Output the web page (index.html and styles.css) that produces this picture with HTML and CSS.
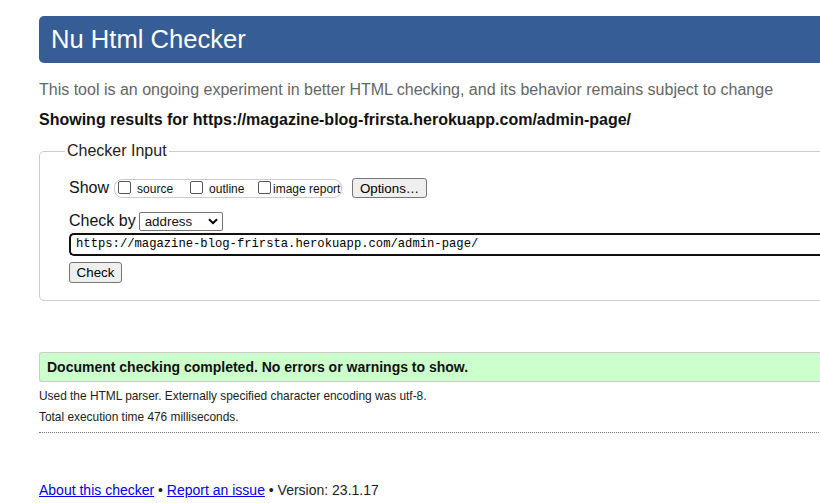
FILE: index.html
```html
<!DOCTYPE html>
<html lang="en">
<head>
<meta charset="utf-8">
<title>Nu Html Checker</title>
<link rel="stylesheet" href="styles.css">
</head>
<body>
<div class="page">
  <h1 class="title">Nu Html Checker</h1>
  <p class="intro">This tool is an ongoing experiment in better HTML checking, and its behavior remains subject to change</p>
  <p class="showing">Showing results for https://magazine-blog-frirsta.herokuapp.com/admin-page/</p>
  <fieldset class="input-box">
    <legend class="legend">Checker Input</legend>
    <div class="row show-row">
      <span class="label">Show</span>
      <span class="group">
        <label class="opt opt-source"><input type="checkbox" class="cb">source</label>
        <label class="opt opt-outline"><input type="checkbox" class="cb">outline</label>
        <label class="opt opt-image"><input type="checkbox" class="cb">image report</label>
      </span>
      <button class="btn btn-options" type="button">Options…</button>
    </div>
    <div class="row checkby-row">
      <span class="label">Check by</span>
      <span class="select">address<svg class="chev" width="10" height="7" viewBox="0 0 10 7"><path d="M1 1.2 L5 5.2 L9 1.2" fill="none" stroke="#000" stroke-width="2"/></svg></span>
    </div>
    <div class="url">https://magazine-blog-frirsta.herokuapp.com/admin-page/</div>
    <div class="row">
      <button class="btn btn-check" type="button">Check</button>
    </div>
  </fieldset>
  <p class="success">Document checking completed. No errors or warnings to show.</p>
  <p class="details">Used the HTML parser. Externally specified character encoding was utf-8.</p>
  <p class="details">Total execution time 476 milliseconds.</p>
  <hr class="dots">
  <p class="footer"><a href="#">About this checker</a> • <a href="#">Report an issue</a> • Version: 23.1.17</p>
</div>
</body>
</html>
```
FILE: styles.css
```css
html, body {
  margin: 0;
  padding: 0;
  overflow: hidden;
  background: #fff;
}
body {
  font-family: "Liberation Sans", Arial, sans-serif;
  color: #111;
}
.page {
  width: 1000px;
  padding: 16px 0 0 39px;
}
.title {
  margin: 0;
  height: 47px;
  line-height: 47px;
  background: #365d95;
  color: #fff;
  font-weight: normal;
  font-size: 25.6px;
  padding-left: 12px;
  border-radius: 5px;
}
.intro {
  margin: 18px 0 0;
  font-size: 16px;
  line-height: 18px;
  color: #666;
}
.showing {
  margin: 12px 0 0;
  font-size: 16px;
  line-height: 18px;
  font-weight: bold;
}
.input-box {
  margin: 13px 0 0;
  border: 1px solid #ccc;
  border-radius: 5px;
  padding: 0 0 17px 29px;
  min-width: 0;
}
.legend {
  font-size: 16px;
  line-height: 18px;
  padding: 0 2px;
  margin-left: -4px;
  color: #222;
}
.row {
  display: flex;
  align-items: center;
}
.show-row {
  margin-top: 18px;
  height: 20px;
}
.label {
  font-size: 16px;
  line-height: 18px;
}
.group {
  display: flex;
  align-items: center;
  height: 17px;
  margin-left: 5px;
  border: 1px solid #ccc;
  border-radius: 8px;
  padding: 0 3px 0 3px;
  width: 220px;
  white-space: nowrap;
}
.opt {
  display: flex;
  align-items: center;
  font-size: 12px;
  line-height: 14px;
  padding-top: 2px;
  white-space: nowrap;
}
.cb {
  width: 13px;
  height: 13px;
  margin: 0 6px 0 0;
  appearance: none;
  -webkit-appearance: none;
  border: 1px solid #555;
  border-radius: 2px;
  background: #fff;
  position: relative;
  top: -2px;
  flex: none;
}
.opt-source { width: 72px; flex: none; }
.opt-outline { width: 68px; flex: none; }
.opt-image .cb { margin-right: 2px; }
.btn {
  font-family: "Liberation Sans", Arial, sans-serif;
  font-size: 13.33px;
  color: #000;
  background: #efefef;
  border: 1px solid #767676;
  border-radius: 3px;
  padding: 0 6px;
  height: 20px;
  white-space: nowrap;
}
.btn-options {
  margin-left: 10px;
  width: 75px;
}
.checkby-row {
  margin-top: 13px;
  height: 20px;
}
.select {
  display: flex;
  align-items: center;
  justify-content: space-between;
  margin-left: 3px;
  width: 84px;
  height: 19px;
  box-sizing: border-box;
  border: 1px solid #767676;
  border-radius: 2px;
  font-size: 13.33px;
  padding: 0 4px 0 5px;
}
.chev { display: block; }
.url {
  margin-top: 2px;
  height: 23px;
  box-sizing: border-box;
  border: 2px solid #101010;
  border-radius: 5px 0 0 5px;
  border-right: none;
  font-family: "Liberation Mono", "Courier New", monospace;
  font-size: 12.2px;
  line-height: 19px;
  padding-left: 5px;
  color: #000;
}
.btn-check {
  margin-top: 6px;
  width: 53px;
  height: 21px;
}
.success {
  margin: 51px 0 0;
  height: 28px;
  line-height: 28px;
  background: #ccffcc;
  border: 1px solid #ccc;
  border-right: none;
  border-radius: 3px 0 0 3px;
  font-weight: bold;
  font-size: 14px;
  padding-left: 7px;
}
.details {
  margin: 7px 0 0;
  font-size: 11.9px;
  line-height: 14px;
  color: #222;
}
.details + .details { margin-top: 7px; }
.dots {
  margin: 8px 0 0;
  border: none;
  border-top: 1px dotted #777;
  height: 0;
}
.footer {
  margin: 49px 0 0;
  font-size: 14px;
  line-height: 17px;
  color: #222;
}
.footer a { color: #0000ee; }
```
